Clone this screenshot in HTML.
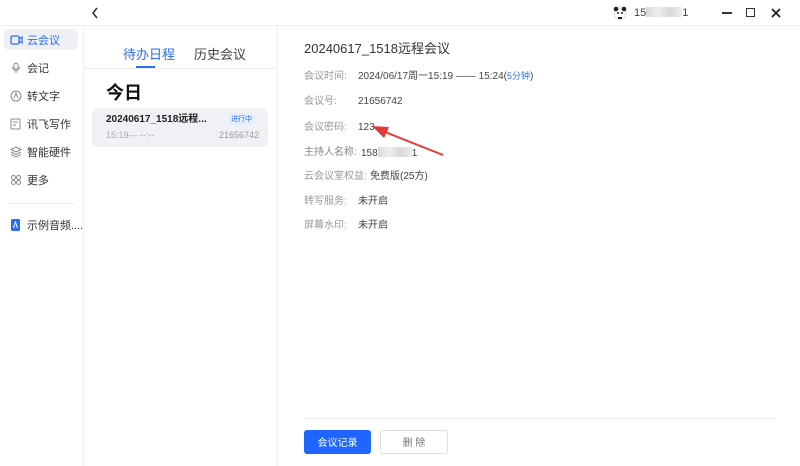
<!DOCTYPE html>
<html><head><meta charset="utf-8">
<style>
*{margin:0;padding:0;box-sizing:border-box}
body{width:800px;height:466px;overflow:hidden;background:#fff;font-family:"Liberation Sans","Noto Sans CJK SC",sans-serif;position:relative;color:#333}
.abs{position:absolute;white-space:nowrap}
.nav{position:absolute;left:4px;width:74px;height:21px;font-size:11px;line-height:13px;color:#333;display:flex;align-items:center;padding-left:6px;padding-top:3px;white-space:nowrap;overflow:hidden}
.nav svg{margin-right:4px;flex:none;margin-top:-3px}
.lbl{position:absolute;left:304px;font-size:10px;line-height:12px;color:#999;white-space:nowrap}
.val{position:absolute;left:358px;font-size:10px;line-height:12px;color:#444;white-space:nowrap}
.blur{display:inline-block;background:linear-gradient(90deg,#d8d8d8,#eee,#d8d8d8,#eee);height:10px;vertical-align:-1px}
.btn{position:absolute;top:430px;height:24px;border-radius:3px;font-size:10px;display:flex;align-items:center;justify-content:center;line-height:12px;padding-top:3px}
</style></head><body>
<div class="abs" style="left:0;top:25px;width:800px;height:1px;background:#eee"></div>
<svg class="abs" style="left:91px;top:7px" width="8" height="12"><path d="M6 1L2 6l4 5" stroke="#333" stroke-width="1.6" fill="none"/></svg>
<svg class="abs" style="left:612px;top:5px" width="16" height="16"><circle cx="8" cy="8" r="7" fill="#e6ecf4"/><circle cx="4" cy="4" r="2.3" fill="#222"/><circle cx="12" cy="4" r="2.3" fill="#222"/><ellipse cx="8" cy="9" rx="4.5" ry="4" fill="#fff"/><circle cx="6" cy="8" r="1" fill="#222"/><circle cx="10" cy="8" r="1" fill="#222"/><rect x="6" y="12" width="4" height="2" fill="#222"/></svg>
<div class="abs" style="left:634px;top:7px;font-size:11px;line-height:13px;color:#444">15<span class="blur" style="width:36px"></span>1</div>
<div class="abs" style="left:722px;top:12px;width:10px;height:1.6px;background:#333"></div>
<div class="abs" style="left:746px;top:8px;width:9px;height:9px;border:1.6px solid #333"></div>
<svg class="abs" style="left:771px;top:8px" width="10" height="10"><path d="M1 1L9 9M9 1L1 9" stroke="#222" stroke-width="1.8"/></svg>

<div class="abs" style="left:83px;top:26px;width:1px;height:440px;background:#eee"></div>
<div class="nav" style="top:29px;background:#eef0f5;border-radius:5px;color:#2a6cf6"><svg width="13" height="10"><rect x="1" y="1" width="8" height="8" rx="1.5" stroke="#2a6cf6" stroke-width="1.3" fill="none"/><path d="M9 4l3-2v6l-3-2" stroke="#2a6cf6" stroke-width="1.2" fill="none"/></svg>云会议</div>
<div class="nav" style="top:57px"><svg width="13" height="12"><rect x="4" y="1" width="4" height="6" rx="2" stroke="#888" fill="none"/><path d="M2.5 5a3.5 3.5 0 007 0M6 9v2" stroke="#888" fill="none"/></svg>会记</div>
<div class="nav" style="top:85px"><svg width="13" height="12"><circle cx="6" cy="6" r="5" stroke="#888" fill="none"/><path d="M4 8l2-5 2 5" stroke="#888" fill="none"/></svg>转文字</div>
<div class="nav" style="top:113px"><svg width="13" height="12"><rect x="1" y="1" width="9" height="10" rx="1" stroke="#888" fill="none"/><path d="M3 4h5M3 7h3" stroke="#888"/></svg>讯飞写作</div>
<div class="nav" style="top:141px"><svg width="13" height="12"><path d="M6 1l5 2.5-5 2.5-5-2.5zM1 6l5 2.5 5-2.5M1 8.5l5 2.5 5-2.5" stroke="#888" fill="none"/></svg>智能硬件</div>
<div class="nav" style="top:169px"><svg width="13" height="12"><circle cx="3.5" cy="3.5" r="2" stroke="#888" fill="none"/><circle cx="8.5" cy="3.5" r="2" stroke="#888" fill="none"/><circle cx="3.5" cy="8.5" r="2" stroke="#888" fill="none"/><circle cx="8.5" cy="8.5" r="2" stroke="#888" fill="none"/></svg>更多</div>
<div class="abs" style="left:9px;top:203px;width:66px;height:1px;background:#eee"></div>
<div class="nav" style="top:214px;width:80px"><svg width="13" height="12"><rect x="1" y="0" width="9" height="12" rx="1.5" fill="#2a6cf6"/><path d="M3.5 9l2-6 2 6" stroke="#fff" fill="none"/></svg>示例音频....</div>

<div class="abs" style="left:277px;top:26px;width:1px;height:440px;background:#eee"></div>
<div class="abs" style="left:84px;top:68px;width:193px;height:1px;background:#eee"></div>
<div class="abs" style="left:123px;top:47px;font-size:13px;line-height:16px;color:#2a6cf6">待办日程</div>
<div class="abs" style="left:136px;top:66px;width:19px;height:2px;background:#2a6cf6"></div>
<div class="abs" style="left:194px;top:47px;font-size:13px;line-height:16px;color:#444">历史会议</div>
<div class="abs" style="left:106px;top:82px;font-size:18px;line-height:22px;font-weight:bold;color:#111">今日</div>
<div class="abs" style="left:92px;top:108px;width:176px;height:39px;background:#f0f1f4;border-radius:6px"></div>
<div class="abs" style="left:106px;top:114px;font-size:10px;line-height:12px;font-weight:bold;color:#222">20240617_1518远程...</div>
<div class="abs" style="left:228px;top:113px;width:27px;height:12px;background:#e6effd;border-radius:2px;font-size:7px;color:#2a6cf6;text-align:center;line-height:13px">进行中</div>
<div class="abs" style="left:106px;top:130px;font-size:9px;line-height:11px;color:#aaa">15:19— --:--</div>
<div class="abs" style="left:219px;top:130px;font-size:9px;line-height:11px;color:#999">21656742</div>

<div class="abs" style="left:304px;top:41px;font-size:13px;line-height:16px;color:#333">20240617_1518远程会议</div>
<div class="lbl" style="top:71px">会议时间:</div><div class="val" style="top:70px">2024/06/17周一15:19 —— 15:24(<span style="color:#2a6cf6;font-size:9px">5分钟</span>)</div>
<div class="lbl" style="top:96px">会议号:</div><div class="val" style="top:96px">21656742</div>
<div class="lbl" style="top:122px">会议密码:</div><div class="val" style="top:122px">123</div>
<div class="lbl" style="top:147px;color:#888">主持人名称:</div><div class="val" style="top:147px;left:361px">158<span class="blur" style="width:34px"></span>1</div>
<div class="lbl" style="top:171px">云会议室权益:</div><div class="val" style="top:171px;left:370px">免费版(25方)</div>
<div class="lbl" style="top:196px">转写服务:</div><div class="val" style="top:196px">未开启</div>
<div class="lbl" style="top:220px">屏幕水印:</div><div class="val" style="top:220px">未开启</div>
<svg class="abs" style="left:0;top:0" width="800" height="466"><path d="M443 155L380 130" stroke="#e53935" stroke-width="2"/><path d="M372 126L389 127L384 138Z" fill="#e53935"/></svg>

<div class="abs" style="left:304px;top:418px;width:472px;height:1px;background:#eee"></div>
<div class="btn" style="left:304px;width:67px;background:#1e66ff;color:#fff">会议记录</div>
<div class="btn" style="left:380px;width:68px;border:1px solid #ddd;color:#777">删 除</div>
</body></html>
